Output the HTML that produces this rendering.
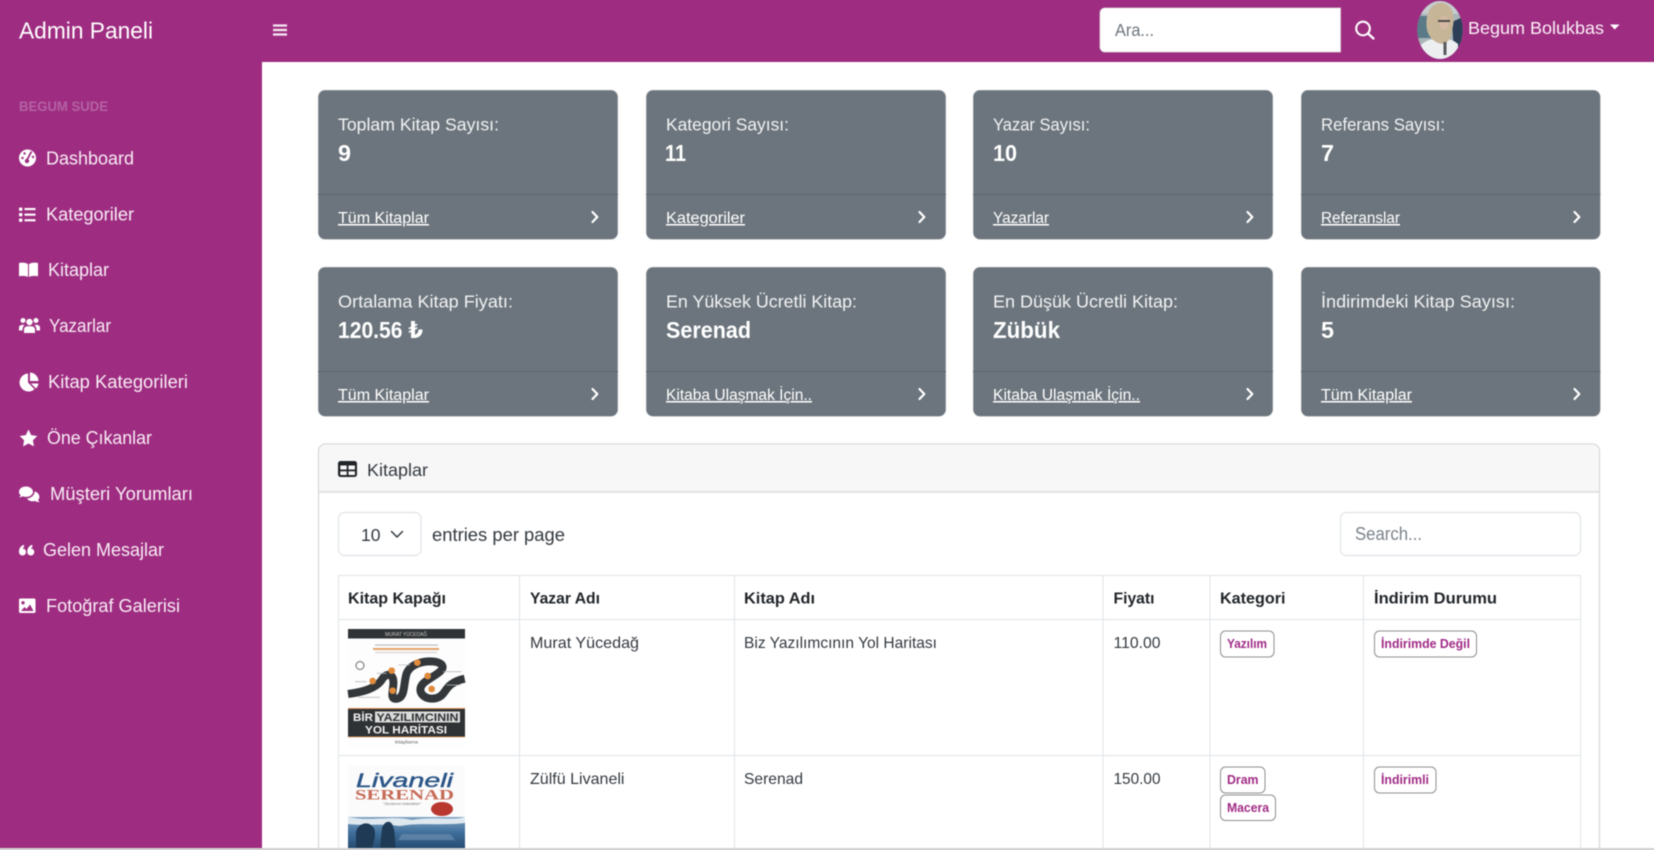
<!DOCTYPE html>
<html lang="tr">
<head>
<meta charset="utf-8">
<title>Admin Paneli</title>
<style>
html,body{margin:0;padding:0;background:#fff;width:1654px;height:850px;overflow:hidden}
#page{position:absolute;left:0;top:0;width:1654px;height:850px;overflow:hidden;contain:strict}
svg{display:block;position:absolute;left:-10px;top:-10px;filter:blur(.4px)}
text{font-family:"Liberation Sans","DejaVu Sans",sans-serif;white-space:pre}
.nav{font-size:18px;fill:#f8ecf5}
.lab{font-size:17.500px;fill:#f2f3f4}
.num{font-size:23.500px;font-weight:700;fill:#fff}
.foot{font-size:15.500px;fill:#fff;text-decoration:underline}
.th{font-size:15.500px;font-weight:700;fill:#212529}
.td{font-size:16px;fill:#343a40}
.bd{font-size:12.500px;font-weight:700;fill:#a02a85}
.ch{fill:none;stroke:#fff;stroke-width:2.200;stroke-linecap:round;stroke-linejoin:round}
.ln{fill:#e1e4e8}
</style>
</head>
<body>
<div id="page">
<svg width="1674" height="870" viewBox="-10 -10 1674 870" xmlns="http://www.w3.org/2000/svg">
<defs>
<linearGradient id="wc" x1="0" y1="0" x2="0" y2="1"><stop offset="0" stop-color="#7fa3c2"/><stop offset=".5" stop-color="#3f6f9c"/><stop offset="1" stop-color="#264c72"/></linearGradient>
<clipPath id="av"><ellipse cx="1440" cy="30" rx="22.700" ry="29"/></clipPath>
</defs>
<rect x="-10" y="-10" width="1674" height="870" fill="#fff"/>

<!-- top bar and sidebar -->
<rect x="-10" y="-10" width="1674" height="72" fill="#9e2d81"/>
<rect x="-10" y="-10" width="272" height="858" fill="#9e2d81"/>
<rect x="-10" y="848" width="1674" height="12" fill="#d2d2d2"/>

<text x="19" y="38.500" font-size="23.500" fill="#fff" textLength="134" lengthAdjust="spacingAndGlyphs">Admin Paneli</text>
<path d="M273 25.500h14M273 30h14M273 34.500h14" stroke="#f6e9f3" stroke-width="2.200" fill="none"/>

<!-- search -->
<path d="M1105 8H1340.500V52H1105a5 5 0 0 1-5-5V13a5 5 0 0 1 5-5z" fill="#fff" stroke="#dcdcdc" stroke-width=".8"/>
<text x="1115" y="36" font-size="17.500" fill="#6c757d" textLength="39" lengthAdjust="spacingAndGlyphs">Ara...</text>
<circle cx="1363" cy="28.500" r="6.800" fill="none" stroke="#fff" stroke-width="2.100"/>
<path d="M1368 33.500L1373.500 38.500" stroke="#fff" stroke-width="2.300" stroke-linecap="round"/>

<!-- avatar -->
<g clip-path="url(#av)">
<rect x="1415" y="0" width="50" height="60" fill="#a8b4b8"/>
<rect x="1415" y="0" width="50" height="14" fill="#c5ccce"/>
<rect x="1415" y="16" width="22" height="22" fill="#5a7a88"/>
<path d="M1452 22L1465 16V52L1454 52z" fill="#2d3f58"/>
<path d="M1420 46C1428 36 1450 36 1458 44V60H1420z" fill="#eceef0"/>
<path d="M1427 30C1424 10 1434 2 1443 3C1453 5 1456 18 1452 30C1452 36 1449 42 1444 44C1436 44 1429 38 1427 30z" fill="#c6b597"/>
<ellipse cx="1444" cy="23" rx="5" ry="7" fill="#d4b8a4"/>
<path d="M1438 21h12" stroke="#4b4b4b" stroke-width="2"/>
<path d="M1445 42v13" stroke="#55585c" stroke-width="3"/>
</g>
<text x="1468" y="34" font-size="17.500" fill="#fbf1f8" textLength="136" lengthAdjust="spacingAndGlyphs">Begum Bolukbas</text>
<path d="M1610 24.500h9.500l-4.750 5z" fill="#fff"/>

<!-- sidebar content -->
<text x="19" y="111" font-size="13.500" font-weight="700" fill="#b562a5" textLength="89" lengthAdjust="spacingAndGlyphs">BEGUM SUDE</text>

<!-- gauge -->
<circle cx="27.500" cy="158" r="8.500" fill="#fff"/>
<path d="M27 160L31.500 151.500" stroke="#9e2d81" stroke-width="1.800"/>
<circle cx="27" cy="161" r="2.200" fill="#9e2d81"/>
<circle cx="22.500" cy="158" r="1.200" fill="#9e2d81"/><circle cx="24.500" cy="153.500" r="1.200" fill="#9e2d81"/><circle cx="33" cy="157" r="1.200" fill="#9e2d81"/>
<text class="nav" x="46" y="164.500" textLength="88" lengthAdjust="spacingAndGlyphs">Dashboard</text>

<!-- list -->
<g fill="#fff"><rect x="19" y="207.500" width="3.400" height="3.400" rx="1"/><rect x="19" y="213" width="3.400" height="3.400" rx="1"/><rect x="19" y="218.500" width="3.400" height="3.400" rx="1"/>
<rect x="24.500" y="208" width="11" height="2.100"/><rect x="24.500" y="213.600" width="11" height="2.100"/><rect x="24.500" y="219.200" width="11" height="2.100"/></g>
<text class="nav" x="46" y="220.500" textLength="88" lengthAdjust="spacingAndGlyphs">Kategoriler</text>

<!-- book -->
<path d="M19 263C23 262.300 26 262.800 28 264.100V277C26 276 23 275.600 19 276.200zM38 263C34 262.300 31 262.800 29 264.100V277C31 276 34 275.600 38 276.200z" fill="#fff"/>
<text class="nav" x="48" y="276" textLength="61" lengthAdjust="spacingAndGlyphs">Kitaplar</text>

<!-- users -->
<g fill="#fff"><circle cx="23" cy="320.500" r="2.500"/><circle cx="36" cy="320.500" r="2.500"/><circle cx="29.500" cy="322" r="3.200"/>
<path d="M19 330.500v-2.600c0-2 1.600-3 3.400-3h2.400c-1.400 1-2.400 2.800-2.400 5.600zM40 330.500v-2.600c0-2-1.600-3-3.400-3h-2.400c1.400 1 2.400 2.800 2.400 5.600zM24 333v-3.200c0-2.200 1.600-3.600 3.600-3.600h3.800c2 0 3.600 1.400 3.600 3.600v3.200z"/></g>
<text class="nav" x="49" y="332" textLength="62" lengthAdjust="spacingAndGlyphs">Yazarlar</text>

<!-- pie -->
<path d="M28 373.500V382.500L34.500 389.200A9 9 0 1 1 28 373.500z" fill="#fff"/>
<path d="M30 372.500A9 9 0 0 1 38.500 381H30z" fill="#fff"/>
<path d="M31 383.500H38.500A9 9 0 0 1 36 388.500z" fill="#fff"/>
<text class="nav" x="48" y="388" textLength="140" lengthAdjust="spacingAndGlyphs">Kitap Kategorileri</text>

<!-- star -->
<path d="M28.500 429.500l2.700 5.600 6.100.9-4.400 4.300 1 6.100-5.400-2.900-5.400 2.900 1-6.100-4.400-4.300 6.100-.9z" fill="#fff"/>
<text class="nav" x="47" y="444" textLength="105" lengthAdjust="spacingAndGlyphs">Öne Çıkanlar</text>

<!-- comments -->
<path d="M26 486.500c-3.900 0-7 2.300-7 5.300 0 1.300.6 2.500 1.600 3.400-.3 1-.9 1.700-1.500 2.300 1.400-.1 2.700-.6 3.600-1.200 1 .4 2.100.6 3.300.6 3.900 0 7-2.300 7-5.100s-3.100-5.300-7-5.300z" fill="#fff"/>
<path d="M34.500 491.500c.3 3.400-3 6.600-7.500 7 1.100 1.700 3.200 2.800 5.600 2.800.9 0 1.700-.1 2.400-.4.8.6 2.400 1.200 4.600 1.400-.7-.7-1.300-1.600-1.500-2.400.8-.8 1.300-1.800 1.300-3 0-2.600-2-4.800-4.900-5.400z" fill="#fff"/>
<text class="nav" x="50" y="500" textLength="143" lengthAdjust="spacingAndGlyphs">Müşteri Yorumları</text>

<!-- quote -->
<g fill="#fff">
<circle cx="22.500" cy="552" r="3.500"/><circle cx="30.800" cy="552" r="3.500"/>
<path d="M19 552c0-3.500 1.500-6 5-7.200v2.400c-1.500.6-2.200 2-2.200 4.800zM27.300 552c0-3.500 1.500-6 5-7.200v2.400c-1.500.6-2.200 2-2.200 4.800z"/>
</g>
<text class="nav" x="43" y="556" textLength="121" lengthAdjust="spacingAndGlyphs">Gelen Mesajlar</text>

<!-- image -->
<rect x="19" y="598.500" width="16.500" height="14.500" rx="1.500" fill="#fff"/>
<circle cx="23" cy="602.800" r="1.700" fill="#9e2d81"/>
<path d="M21 611l3.500-4 2 2 3.500-4.500 3.500 6.500z" fill="#9e2d81"/>
<text class="nav" x="46" y="612" textLength="134" lengthAdjust="spacingAndGlyphs">Fotoğraf Galerisi</text>

<!-- stat cards -->
<g fill="#6c757d" stroke="#e4e6e8" stroke-width=".6">
<rect x="318" y="90" width="300" height="149.500" rx="7"/><rect x="646" y="90" width="300" height="149.500" rx="7"/><rect x="973" y="90" width="300" height="149.500" rx="7"/><rect x="1301" y="90" width="299.500" height="149.500" rx="7"/>
<rect x="318" y="267" width="300" height="149.500" rx="7"/><rect x="646" y="267" width="300" height="149.500" rx="7"/><rect x="973" y="267" width="300" height="149.500" rx="7"/><rect x="1301" y="267" width="299.500" height="149.500" rx="7"/>
</g>
<g fill="#5d656c">
<rect x="318" y="194" width="300" height="1"/><rect x="646" y="194" width="300" height="1"/><rect x="973" y="194" width="300" height="1"/><rect x="1301" y="194" width="299.500" height="1"/>
<rect x="318" y="371" width="300" height="1"/><rect x="646" y="371" width="300" height="1"/><rect x="973" y="371" width="300" height="1"/><rect x="1301" y="371" width="299.500" height="1"/>
</g>

<text class="lab" x="338" y="130.500" textLength="161" lengthAdjust="spacingAndGlyphs">Toplam Kitap Sayısı:</text>
<text class="num" x="338" y="161" textLength="13" lengthAdjust="spacingAndGlyphs">9</text>
<text class="foot" x="338" y="223" textLength="91" lengthAdjust="spacingAndGlyphs">Tüm Kitaplar</text>

<text class="lab" x="666" y="130.500" textLength="123" lengthAdjust="spacingAndGlyphs">Kategori Sayısı:</text>
<text class="num" x="665" y="161" textLength="21" lengthAdjust="spacingAndGlyphs">11</text>
<text class="foot" x="666" y="223" textLength="79" lengthAdjust="spacingAndGlyphs">Kategoriler</text>

<text class="lab" x="993" y="130.500" textLength="97" lengthAdjust="spacingAndGlyphs">Yazar Sayısı:</text>
<text class="num" x="993" y="161" textLength="24" lengthAdjust="spacingAndGlyphs">10</text>
<text class="foot" x="993" y="223" textLength="56" lengthAdjust="spacingAndGlyphs">Yazarlar</text>

<text class="lab" x="1321" y="130.500" textLength="124" lengthAdjust="spacingAndGlyphs">Referans Sayısı:</text>
<text class="num" x="1321" y="161" textLength="13" lengthAdjust="spacingAndGlyphs">7</text>
<text class="foot" x="1321" y="223" textLength="79" lengthAdjust="spacingAndGlyphs">Referanslar</text>

<text class="lab" x="338" y="307.500" textLength="175" lengthAdjust="spacingAndGlyphs">Ortalama Kitap Fiyatı:</text>
<text class="num" x="338" y="338" textLength="85" lengthAdjust="spacingAndGlyphs">120.56 ₺</text>
<text class="foot" x="338" y="400" textLength="91" lengthAdjust="spacingAndGlyphs">Tüm Kitaplar</text>

<text class="lab" x="666" y="307.500" textLength="191" lengthAdjust="spacingAndGlyphs">En Yüksek Ücretli Kitap:</text>
<text class="num" x="666" y="338" textLength="85" lengthAdjust="spacingAndGlyphs">Serenad</text>
<text class="foot" x="666" y="400" textLength="146" lengthAdjust="spacingAndGlyphs">Kitaba Ulaşmak İçin..</text>

<text class="lab" x="993" y="307.500" textLength="185" lengthAdjust="spacingAndGlyphs">En Düşük Ücretli Kitap:</text>
<text class="num" x="993" y="338" textLength="67" lengthAdjust="spacingAndGlyphs">Zübük</text>
<text class="foot" x="993" y="400" textLength="147" lengthAdjust="spacingAndGlyphs">Kitaba Ulaşmak İçin..</text>

<text class="lab" x="1321" y="307.500" textLength="194" lengthAdjust="spacingAndGlyphs">İndirimdeki Kitap Sayısı:</text>
<text class="num" x="1321" y="338" textLength="13" lengthAdjust="spacingAndGlyphs">5</text>
<text class="foot" x="1321" y="400" textLength="91" lengthAdjust="spacingAndGlyphs">Tüm Kitaplar</text>

<g class="ch">
<path d="M592.500 212l4.800 5-4.800 5"/><path d="M919.500 212l4.800 5-4.800 5"/><path d="M1247.500 212l4.800 5-4.800 5"/><path d="M1574.500 212l4.800 5-4.800 5"/>
<path d="M592.500 389l4.800 5-4.800 5"/><path d="M919.500 389l4.800 5-4.800 5"/><path d="M1247.500 389l4.800 5-4.800 5"/><path d="M1574.500 389l4.800 5-4.800 5"/>
</g>

<!-- panel -->
<path d="M318.500 848V451a7 7 0 0 1 7-7H1592.500a7 7 0 0 1 7 7V848" fill="#fff" stroke="#d8d9db" stroke-width="1.300"/>
<path d="M319.500 492V451a6 6 0 0 1 6-6H1592.500a6 6 0 0 1 6 6V492z" fill="#f7f7f7"/>
<rect x="319" y="491" width="1280" height="1.800" fill="#dfe0e2"/>
<rect x="338" y="461" width="19" height="16" rx="2.500" fill="#212529"/>
<g fill="#f7f7f7"><rect x="340.300" y="465.500" width="6.400" height="4"/><rect x="348.500" y="465.500" width="6.400" height="4"/><rect x="340.300" y="471.300" width="6.400" height="3.700"/><rect x="348.500" y="471.300" width="6.400" height="3.700"/></g>
<text x="367" y="476" font-size="17.500" fill="#343a40" textLength="61" lengthAdjust="spacingAndGlyphs">Kitaplar</text>

<!-- controls -->
<rect x="338.500" y="512.500" width="82.500" height="43" rx="6" fill="#fff" stroke="#e0e3e7" stroke-width="1.200"/>
<text x="361" y="541" font-size="17.500" fill="#343a40" textLength="19.500" lengthAdjust="spacingAndGlyphs">10</text>
<path d="M391.500 531.500l5.500 5.500 5.500-5.500" fill="none" stroke="#343a40" stroke-width="1.500" stroke-linecap="round" stroke-linejoin="round"/>
<text x="432" y="541" font-size="18" fill="#343a40" textLength="133" lengthAdjust="spacingAndGlyphs">entries per page</text>
<rect x="1340.500" y="512.500" width="240" height="43" rx="6" fill="#fff" stroke="#e0e3e7" stroke-width="1.200"/>
<text x="1355" y="540" font-size="18" fill="#7b838b" textLength="67" lengthAdjust="spacingAndGlyphs">Search...</text>

<!-- table lines -->
<g class="ln">
<rect x="338" y="575" width="1243" height="1"/><rect x="338" y="619" width="1243" height="1"/><rect x="338" y="755" width="1243" height="1"/>
<rect x="338" y="575" width="1" height="273"/><rect x="519" y="575" width="1" height="273"/><rect x="734" y="575" width="1" height="273"/><rect x="1102.500" y="575" width="1" height="273"/><rect x="1209.500" y="575" width="1" height="273"/><rect x="1363" y="575" width="1" height="273"/><rect x="1580" y="575" width="1" height="273"/>
</g>

<text class="th" x="348" y="603.500" textLength="98" lengthAdjust="spacingAndGlyphs">Kitap Kapağı</text>
<text class="th" x="530" y="603.500" textLength="70" lengthAdjust="spacingAndGlyphs">Yazar Adı</text>
<text class="th" x="744" y="603.500" textLength="71" lengthAdjust="spacingAndGlyphs">Kitap Adı</text>
<text class="th" x="1113.500" y="603.500" textLength="41" lengthAdjust="spacingAndGlyphs">Fiyatı</text>
<text class="th" x="1220" y="603.500" textLength="65.500" lengthAdjust="spacingAndGlyphs">Kategori</text>
<text class="th" x="1374" y="603.500" textLength="123" lengthAdjust="spacingAndGlyphs">İndirim Durumu</text>

<text class="td" x="530" y="648" textLength="109" lengthAdjust="spacingAndGlyphs">Murat Yücedağ</text>
<text class="td" x="744" y="648" textLength="193" lengthAdjust="spacingAndGlyphs">Biz Yazılımcının Yol Haritası</text>
<text class="td" x="1113.500" y="648" textLength="47" lengthAdjust="spacingAndGlyphs">110.00</text>
<text class="td" x="530" y="784" textLength="94.500" lengthAdjust="spacingAndGlyphs">Zülfü Livaneli</text>
<text class="td" x="744" y="784" textLength="59" lengthAdjust="spacingAndGlyphs">Serenad</text>
<text class="td" x="1113.500" y="784" textLength="47" lengthAdjust="spacingAndGlyphs">150.00</text>

<!-- badges -->
<g fill="#fff" stroke="#8f8f8f" stroke-width="1">
<rect x="1220.500" y="631" width="53.500" height="26" rx="5"/>
<rect x="1374.500" y="631" width="102" height="26" rx="5"/>
<rect x="1220.500" y="767" width="44.500" height="26" rx="5"/>
<rect x="1220.500" y="795" width="55" height="25.500" rx="5"/>
<rect x="1374.500" y="767" width="61.500" height="26" rx="5"/>
</g>
<text class="bd" x="1227" y="648" textLength="40" lengthAdjust="spacingAndGlyphs">Yazılım</text>
<text class="bd" x="1381" y="648" textLength="89" lengthAdjust="spacingAndGlyphs">İndirimde Değil</text>
<text class="bd" x="1227" y="784" textLength="31.500" lengthAdjust="spacingAndGlyphs">Dram</text>
<text class="bd" x="1227" y="812" textLength="42" lengthAdjust="spacingAndGlyphs">Macera</text>
<text class="bd" x="1381" y="784" textLength="48" lengthAdjust="spacingAndGlyphs">İndirimli</text>

<!-- book cover 1 -->
<rect x="348" y="629" width="117" height="119" fill="#fdfdfd"/>
<rect x="348" y="629" width="117" height="9.500" fill="#2f3335"/>
<text x="385" y="636" font-size="5" fill="#c9c9c9" textLength="42" lengthAdjust="spacingAndGlyphs">MURAT YÜCEDAĞ</text>
<rect x="375" y="644.500" width="63" height="1.200" fill="#bdbdbd"/>
<rect x="373" y="648" width="66" height="2" fill="#e3a06a"/>
<rect x="375" y="651.500" width="62" height="2" fill="#e2e2e2"/>
<circle cx="360" cy="665.500" r="4" fill="#fff" stroke="#666" stroke-width="1"/>
<g transform="translate(340 620) scale(.3333)">
<path d="M24 222C70 216 108 205 125 180C137 158 158 160 160 182C163 208 145 240 172 236C196 232 190 190 200 160C215 122 285 116 304 133C322 152 272 170 250 190C226 215 255 244 290 234C322 225 310 190 374 176" fill="none" stroke="#33373a" stroke-width="24"/>
<g fill="#e08a3c"><circle cx="98" cy="183" r="10"/><circle cx="155" cy="152" r="10"/><circle cx="232" cy="128" r="10"/><circle cx="263" cy="168" r="10"/><circle cx="158" cy="212" r="10"/><circle cx="275" cy="207" r="10"/></g>
<g fill="none" stroke="#bbb" stroke-width="2.500"><path d="M45 185h35M110 160h30M175 135h35M310 155h55M320 195h40M55 232h65"/></g>
</g>
<rect x="348" y="708" width="117" height="29" fill="#2e3234"/>
<rect x="348" y="708" width="117" height="1" fill="#d98a4a"/>
<rect x="348" y="736.500" width="117" height=".8" fill="#d98a4a"/>
<rect x="375" y="711.500" width="85" height="11" fill="#dcdcdc"/>
<text x="353" y="721" font-size="11" font-weight="700" fill="#f2f2f2" textLength="20" lengthAdjust="spacingAndGlyphs">BİR</text>
<text x="376.500" y="721" font-size="11" font-weight="700" fill="#2e3234" textLength="82" lengthAdjust="spacingAndGlyphs">YAZILIMCININ</text>
<text x="365" y="733.500" font-size="11" font-weight="700" fill="#f2f2f2" textLength="82" lengthAdjust="spacingAndGlyphs">YOL HARİTASI</text>
<text x="395" y="743.500" font-size="4.500" fill="#666" textLength="23" lengthAdjust="spacingAndGlyphs">kitapliama</text>

<!-- book cover 2 -->
<rect x="348" y="765" width="117" height="83" fill="#fbfbfb"/>
<text x="356" y="787" font-style="italic" font-size="19" fill="#2b5587" stroke="#2b5587" stroke-width=".4" textLength="97" lengthAdjust="spacingAndGlyphs">Livaneli</text>
<text x="355" y="799.500" font-size="14.500" font-weight="700" fill="#c66a55" textLength="99" lengthAdjust="spacingAndGlyphs" style="font-family:'Liberation Serif',serif">SERENAD</text>
<text x="383" y="805" font-size="3.500" fill="#777" textLength="38" lengthAdjust="spacingAndGlyphs">"Okurlarının bekledikleri"</text>
<ellipse cx="442" cy="809" rx="11" ry="7" fill="#b9382f"/>
<rect x="348" y="817" width="117" height="31" fill="url(#wc)"/>
<path d="M348 817C372 822 392 815 412 820C432 816 452 821 465 817V823C440 826 420 822 400 826C380 823 365 826 348 824z" fill="#dfe8ef"/>
<path d="M356 848V832C358 823 368 821 372 826C376 829 376 836 372 848zM380 848L382 828C385 820 391 820 393 826C396 834 394 841 396 848z" fill="#1f3a55"/>
<path d="M402 834h48l5 6H398z" fill="#5a81a5"/>
</svg>
</div>
</body>
</html>
